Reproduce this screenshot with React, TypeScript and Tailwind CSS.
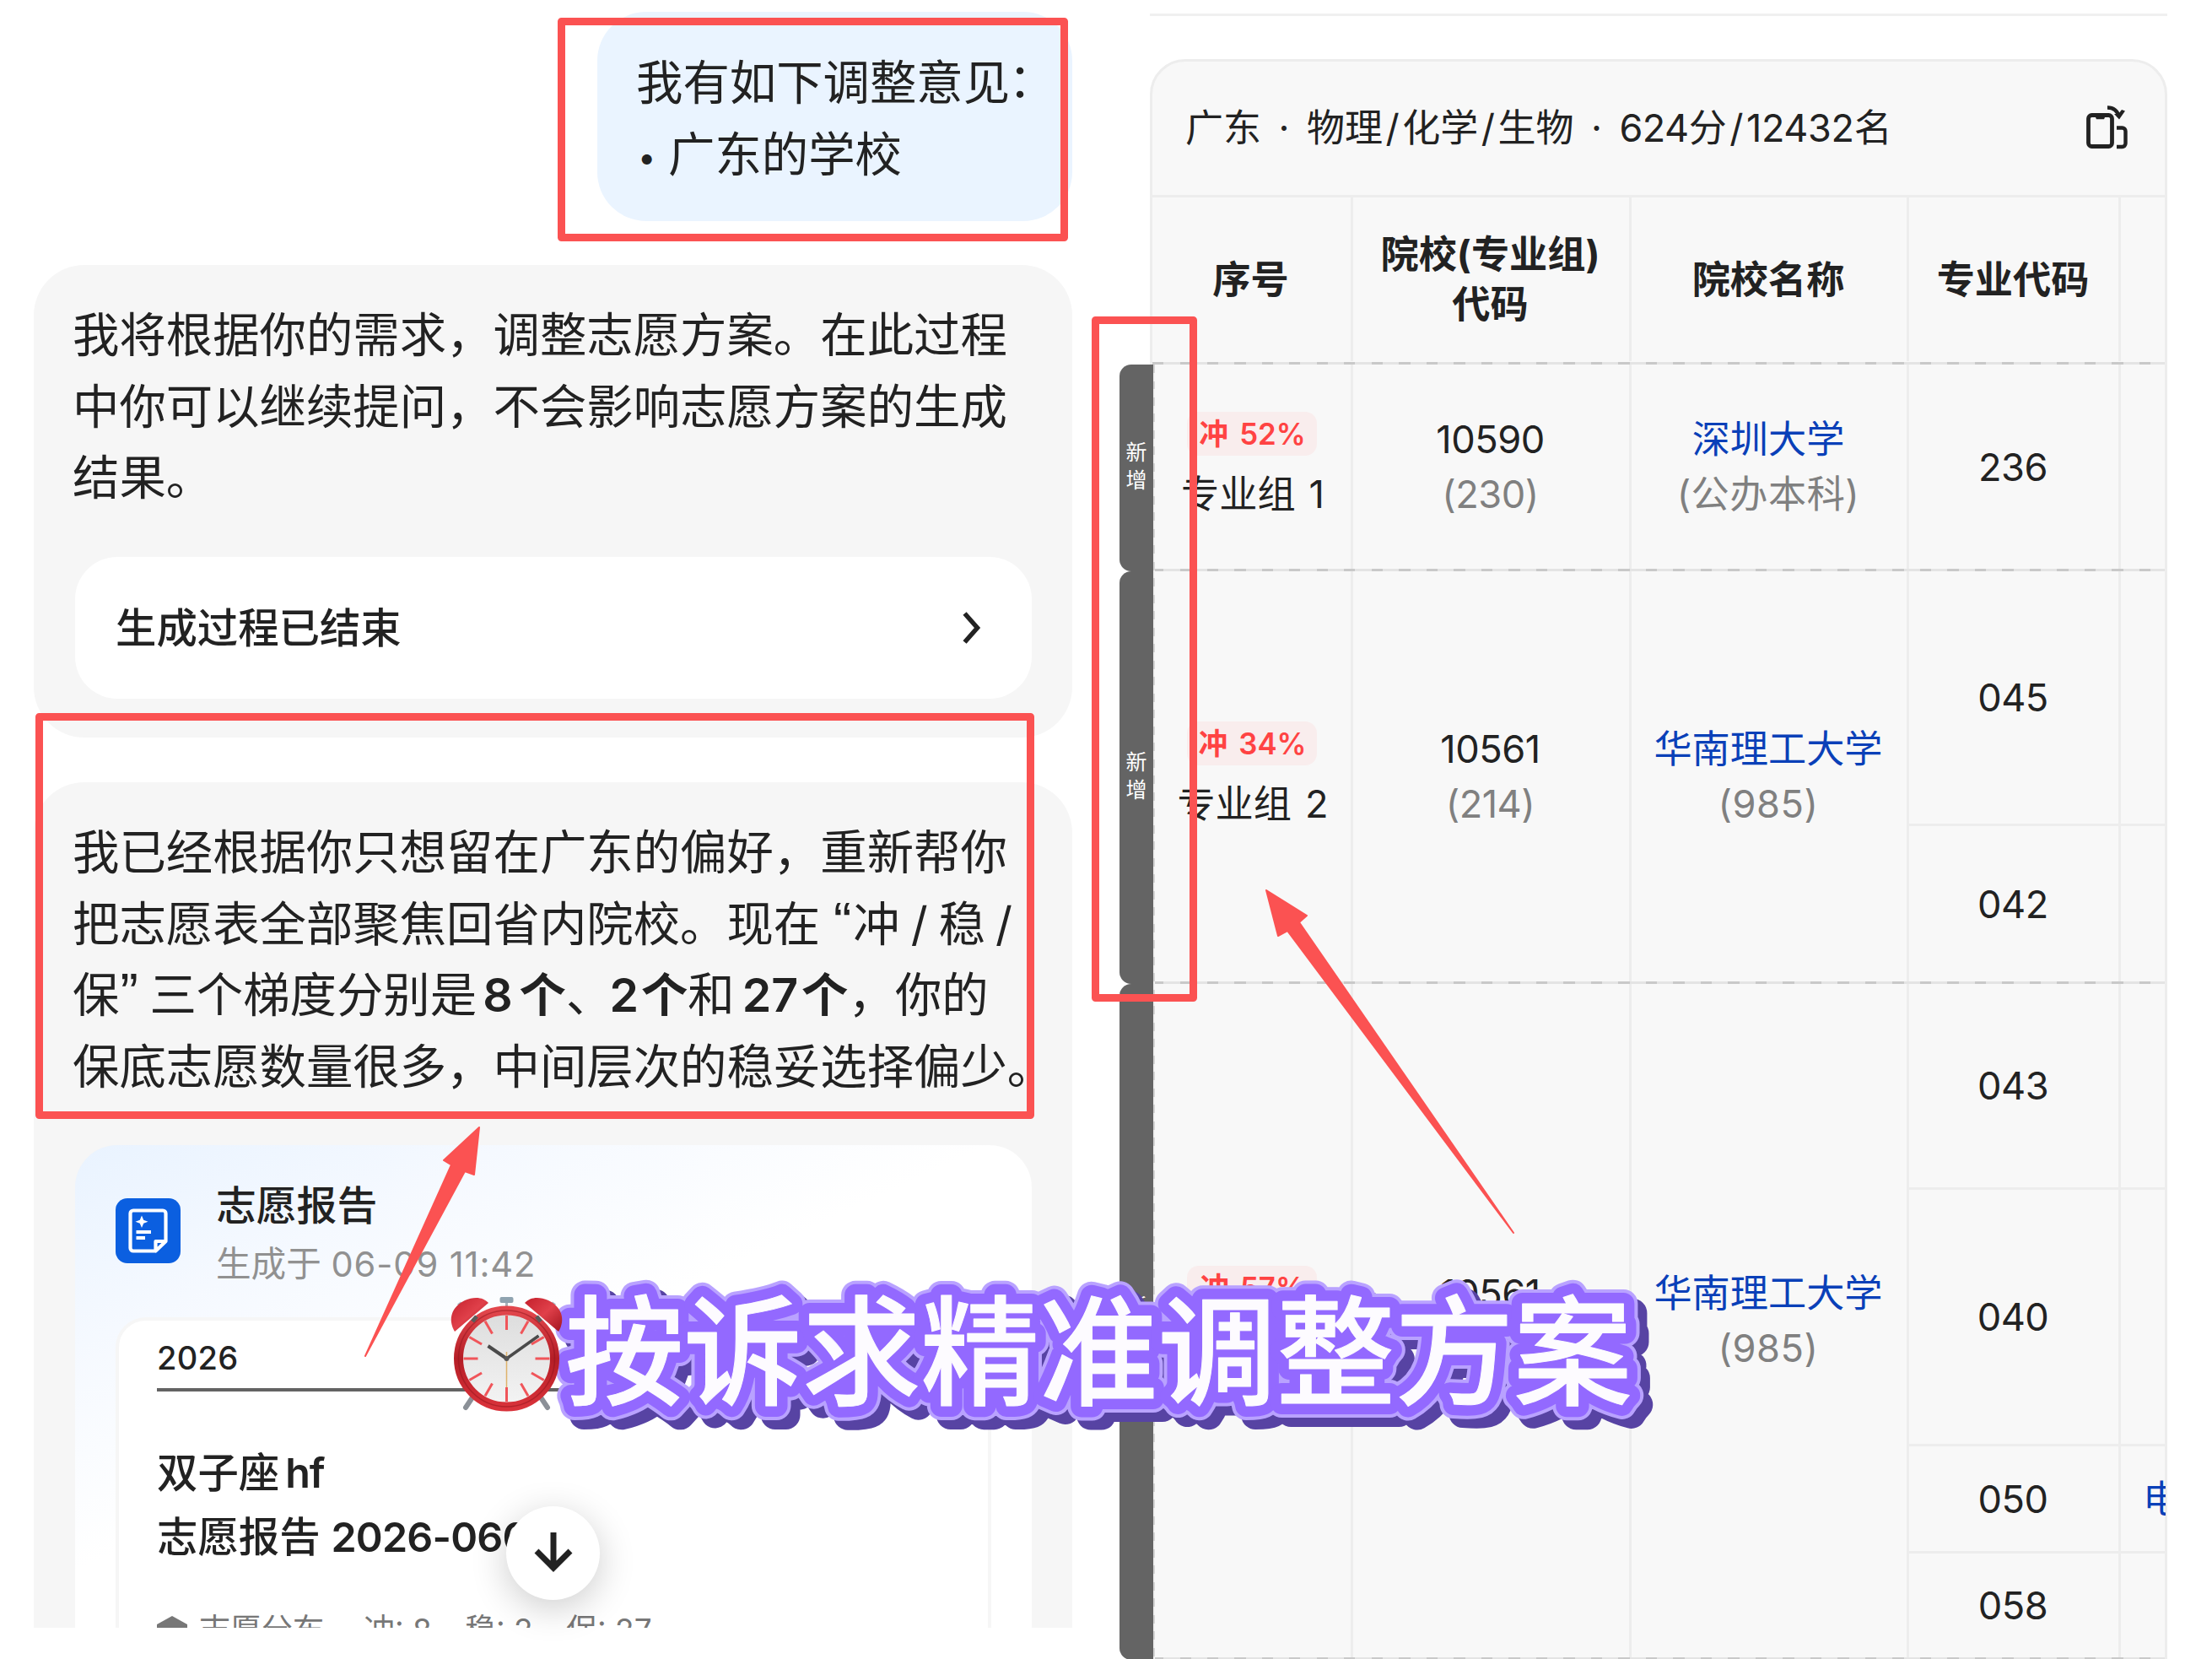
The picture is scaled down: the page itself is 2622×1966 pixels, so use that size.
import type { ReactNode } from "react";

type Major = { code: string; height: string; next?: string };

type Group = {
  rate: string;
  index: number;
  code: string;
  sub: string;
  school: string;
  kind: string;
  height: string;
  majors: Major[];
};

const groups: Group[] = [
  {
    rate: "52%",
    index: 1,
    code: "10590",
    sub: "(230)",
    school: "深圳大学",
    kind: "(公办本科)",
    height: "h-[245px]",
    majors: [{ code: "236", height: "h-[242px]" }],
  },
  {
    rate: "34%",
    index: 2,
    code: "10561",
    sub: "(214)",
    school: "华南理工大学",
    kind: "(985)",
    height: "h-[489px]",
    majors: [
      { code: "045", height: "h-[302px]" },
      { code: "042", height: "h-[185px]" },
    ],
  },
  {
    rate: "57%",
    index: 3,
    code: "10561",
    sub: "(217)",
    school: "华南理工大学",
    kind: "(985)",
    height: "h-[801px]",
    majors: [
      { code: "043", height: "h-[244px]" },
      { code: "040", height: "h-[304px]" },
      { code: "050", height: "h-[127px]", next: "电" },
      { code: "058", height: "h-[123px]" },
    ],
  },
];

function Line({ children }: { children: ReactNode }) {
  return <p className="h-[84.7px] whitespace-nowrap">{children}</p>;
}

function DashedLine() {
  return (
    <div className="absolute inset-x-0 bottom-0 h-[3px] bg-[repeating-linear-gradient(90deg,#c9c9c9_0_13px,#e4e4e4_13px_32.5px)]" />
  );
}

function Cell({ width, children }: { width: string; children?: ReactNode }) {
  return (
    <div
      className={`${width} flex shrink-0 flex-col items-center justify-center border-r-[3px] border-[#ededed] pr-[2px] text-center`}
    >
      {children}
    </div>
  );
}

function Slash() {
  return <span className="mx-[3.500px]">/</span>;
}

function ReportIcon() {
  return (
    <svg viewBox="0 0 77 77" className="mb-[6px] size-[77px] shrink-0">
      <rect width="77" height="77" rx="14" fill="#0b5fe0" />
      <path
        d="M47 62.5H21a3.5 3.5 0 0 1-3.5-3.5V18a3.500 3.500 0 0 1 3.500-3.500h35A3.500 3.500 0 0 1 59.500 18v33L47.500 62.500V51H59"
        fill="none"
        stroke="#fff"
        strokeWidth="4.200"
        strokeLinejoin="round"
      />
      <path d="M31 20.500l2.200 5.300 5.300 2-5.300 2-2.200 5.300-2.200-5.300-5.300-2 5.300-2z" fill="#fff" />
      <path d="M24.500 40H42M24.500 47H35" stroke="#fff" strokeWidth="4.200" />
    </svg>
  );
}

function RotateIcon() {
  return (
    <svg viewBox="0 0 50 52" className="mb-[2px] h-[52px] w-[50px]" fill="none" stroke="#222">
      <rect x="2.500" y="11.500" width="28" height="37" rx="4" strokeWidth="4.800" />
      <path d="M10 12h13l-2 4.300h-9z" fill="#222" stroke="none" />
      <path d="M36 26.500h6.500a4 4 0 0 1 4 4V45a4 4 0 0 1-4 4H36" strokeWidth="4.400" />
      <path d="M25 2.500c8 0 12 4 14 11" strokeWidth="4.400" />
      <path d="M33 10l6 6.500 7-10-4-1.500-4 5z" fill="#222" stroke="none" />
    </svg>
  );
}

function Chat() {
  return (
    <section className="flex h-[1929px] w-[1271px] shrink-0 flex-col overflow-hidden pt-[14px] pl-[40px] text-[55.4px] leading-[84.7px] text-[#222]">
      <div className="h-[248px] w-[563px] shrink-0 self-end rounded-[58px] bg-[#eaf4ff] pt-[42px] pl-[46px]">
        <Line>
          我有如下调整意见<span className="relative -top-[3px] -ml-[2px]">：</span>
        </Line>
        <Line>
          <span className="relative -top-[3px] mr-[6px] ml-[2px] inline-block w-[30px] text-[38px]">•</span>
          广东的学校
        </Line>
      </div>

      <div className="mt-[52px] h-[560px] shrink-0 rounded-[60px] bg-[#f6f6f6] pt-[41px] pl-[46px]">
        <Line>我将根据你的需求，调整志愿方案。在此过程</Line>
        <Line>中你可以继续提问，不会影响志愿方案的生成</Line>
        <Line>结果。</Line>
        <div className="mt-[51px] ml-[3px] flex h-[168px] w-[1134px] items-center justify-between rounded-[50px] bg-white pt-[2px] pr-[59px] pl-[48px] text-[48.400px] font-medium">
          生成过程已结束
          <svg viewBox="0 0 24 42" className="mb-[3px] h-[42px] w-[24px]" fill="none" stroke="#222">
            <path d="M3.500 4l15 17-15 17" strokeWidth="5.500" />
          </svg>
        </div>
      </div>

      <div className="mt-[53px] h-[1100px] shrink-0 rounded-t-[60px] bg-[#f6f6f6] pt-[41px] pl-[46px]">
        <Line>我已经根据你只想留在广东的偏好，重新帮你</Line>
        <Line>
          把志愿表全部聚焦回省内院校。现在
          <span className="inline-block w-[39px] pr-[2px] text-right font-['Liberation_Sans'] text-[64px] leading-none">
            “
          </span>
          冲<span className="mx-[13px]">/</span>稳<span className="ml-[12px]">/</span>
        </Line>
        <Line>
          保
          <span className="inline-block w-[36px] pl-[1px] font-['Liberation_Sans'] text-[64px] leading-none">
            ”
          </span>
          三个梯度分别是
          <b className="ml-[7px] font-semibold">8</b>
          <b className="ml-[8px] font-semibold">个</b>、
          <b className="-ml-[4px] font-semibold">2</b>
          <b className="ml-[3px] font-semibold">个</b>和
          <b className="ml-[9px] font-semibold">27</b>
          <b className="ml-[4px] font-semibold">个</b>，你的
        </Line>
        <Line>保底志愿数量很多，中间层次的稳妥选择偏少。</Line>

        <div className="mt-[50px] ml-[3px] h-[800px] w-[1134px] rounded-[50px] bg-white bg-[linear-gradient(155deg,#e9f3ff_0%,#f5f9ff_18%,#ffffff_38%)] px-[48px] pt-[37px]">
          <div className="flex h-[135px] items-center gap-[42px]">
            <ReportIcon />
            <div>
              <p className="h-[71px] text-[47.800px] leading-[72px] font-medium">志愿报告</p>
              <p className="h-[66px] text-[41.600px] leading-[68px] text-[#919191]">
                生成于 <span className="tracking-[0.900px]">06-09 11:42</span>
              </p>
            </div>
          </div>
          <div className="mt-[32px] h-[600px] rounded-[36px] border-[4px] border-[#f6f6f6] bg-white px-[45px] pt-[16px]">
            <p className="h-[68px] border-b-[4px] border-[#636363] text-[38px] leading-[57px] font-medium tracking-[0.300px]">
              2026
            </p>
            <div className="mt-[59px] text-[48.400px] leading-[76px] font-medium whitespace-nowrap">
              <p>
                双子座<span className="ml-[7px] font-semibold tracking-[-1px]">hf</span>
              </p>
              <p>
                志愿报告 <span className="font-semibold tracking-[-0.800px]">2026-0609</span>
              </p>
            </div>
            <div className="mt-[45px] flex text-[37px] leading-[54px] whitespace-nowrap text-[#777]">
              <svg viewBox="0 0 36 36" className="mt-[8px] mr-[14px] size-[36px]" fill="#777">
                <path d="M18 2l18 10v4L18 26 0 16v-4z" />
              </svg>
              <span className="w-[195px]">志愿分布</span>
              <span className="w-[120px]">冲: 8</span>
              <span className="w-[120px]">稳: 2</span>
              <span>保: 27</span>
            </div>
          </div>
        </div>
      </div>
    </section>
  );
}

function GroupRow({ group }: { group: Group }) {
  return (
    <div className={`${group.height} relative flex pb-[3px] text-[45.2px] leading-[65px] text-[#222]`}>
      <Cell width="w-[238px]">
        <div className="mb-[13px] ml-[3px] flex h-[52px] w-[154px] items-center justify-center gap-[13px] rounded-[14px] bg-[#f9eded] pl-[1px] text-[34.800px] font-semibold text-[#ff4343]">
          <span>冲</span>
          <span>{group.rate}</span>
        </div>
        <p className="ml-[5px] h-[65px] whitespace-nowrap">
          专业组<span className="ml-[16px]">{group.index}</span>
        </p>
      </Cell>
      <Cell width="w-[330px]">
        <p className="tracking-[-0.500px]">{group.code}</p>
        <p className="tracking-[-0.500px] text-[#808080]">{group.sub}</p>
      </Cell>
      <Cell width="w-[329px]">
        <p className="text-[#0a40b8]">{group.school}</p>
        <p className="tracking-[0.500px] text-[#808080]">{group.kind}</p>
      </Cell>
      <div className="flex-1">
        {group.majors.map((m, i) => (
          <div
            key={m.code}
            className={`${m.height} flex ${i < group.majors.length - 1 ? "border-b-[3px] border-[#ededed]" : ""}`}
          >
            <Cell width="w-[251px]">
              <span className="tracking-[-0.500px]">{m.code}</span>
            </Cell>
            <div className="flex w-[53px] items-center overflow-hidden pl-[26px] text-[#0a40b8]">
              {m.next}
            </div>
          </div>
        ))}
      </div>
      <DashedLine />
    </div>
  );
}

function Plan() {
  return (
    <section className="ml-[56px] w-[1242px] shrink-0">
      <div className="mt-[16px] ml-[36px] h-[3px] bg-[#f0f0f0]" />
      <div className="mt-[51px] flex">
        <div className="z-10 w-[40px] shrink-0 pt-[362px]">
          {groups.map((g) => (
            <div
              key={g.index}
              className={`${g.height} flex flex-col items-center justify-center rounded-l-[14px] bg-[#646464] pb-[4px] text-[25px] leading-[32.500px] text-white`}
            >
              <span>新</span>
              <span>增</span>
            </div>
          ))}
        </div>
        <div className="-ml-[4px] w-[1206px] shrink-0 rounded-t-[42px] border-[3px] border-[#ededed] bg-[#f8f8f8]">
          <div className="flex h-[161px] items-center justify-between border-b-[3px] border-[#ededed] pr-[43px] pl-[39px] text-[45px] text-[#222]">
            <p className="whitespace-nowrap">
              广东<span className="mx-[20.500px]">·</span>物理
              <Slash />
              化学
              <Slash />
              生物
              <span className="mx-[20.500px]">·</span>
              <span className="tracking-[-0.500px]">624</span>分<Slash />
              <span className="tracking-[-0.300px]">12432</span>名
            </p>
            <RotateIcon />
          </div>
          <div className="relative flex h-[198px] pb-[4px] text-[45.200px] leading-[59px] font-bold text-[#222]">
            <Cell width="w-[238px]">序号</Cell>
            <Cell width="w-[330px]">
              <p>院校(专业组)</p>
              <p>代码</p>
            </Cell>
            <Cell width="w-[329px]">院校名称</Cell>
            <Cell width="w-[251px]">专业代码</Cell>
            <DashedLine />
          </div>
          <div className="relative">
            {groups.map((g) => (
              <GroupRow key={g.index} group={g} />
            ))}
            <div className="absolute inset-y-0 left-0 w-[3px] bg-[repeating-linear-gradient(180deg,#d4d4d4_0_9.800px,#f0f0f0_9.800px_19.500px)]" />
          </div>
        </div>
      </div>
    </section>
  );
}

function AlarmClock() {
  const ticks = Array.from({ length: 12 }, (_, i) => i * 30);
  return (
    <g>
      <defs>
        <linearGradient id="bell" x1="0" y1="0" x2="1" y2="1">
          <stop offset="0" stopColor="#c4202c" />
          <stop offset="0.500" stopColor="#e0404a" />
          <stop offset="1" stopColor="#a3141e" />
        </linearGradient>
        <linearGradient id="rim" x1="0" y1="0" x2="0" y2="1">
          <stop offset="0" stopColor="#e2474d" />
          <stop offset="0.500" stopColor="#b51e26" />
          <stop offset="1" stopColor="#d8323a" />
        </linearGradient>
        <linearGradient id="face" x1="0" y1="0" x2="0" y2="1">
          <stop offset="0" stopColor="#dcdcdc" />
          <stop offset="1" stopColor="#f4f4f4" />
        </linearGradient>
      </defs>
      <g stroke="#8b9097" strokeWidth="6" strokeLinecap="round">
        <path d="M562 1653l-10 15M639 1653l10 15" />
      </g>
      <path d="M600.500 1541v12" stroke="#a9b2ba" strokeWidth="3" />
      <rect x="592.500" y="1537" width="16" height="7" rx="2" fill="#8fa3b0" />
      <path d="M547 1548l-3-4M654 1548l3-4" stroke="#a9bac4" strokeWidth="5" />
      <path d="M539 1578c-9-15-3-30 12-37 11-5 22-4 28 3z" fill="url(#bell)" />
      <path d="M662 1578c9-15 3-30-12-37-11-5-22-4-28 3z" fill="url(#bell)" />
      <circle cx="600.500" cy="1610" r="57" fill="url(#face)" stroke="url(#rim)" strokeWidth="11" />
      <circle cx="600.500" cy="1610" r="57" fill="none" stroke="#8f141c" strokeWidth="1.500" opacity="0.500" />
      <path d="M560 1566l5-6M641 1566l-5-6" stroke="#5b5b5b" strokeWidth="5" />
      {ticks.map((a) => (
        <path
          key={a}
          d="M600.500 1559v17"
          stroke="#f0555a"
          strokeWidth="3"
          transform={`rotate(${a} 600.500 1610)`}
        />
      ))}
      <path d="M600.500 1610l-22-15" stroke="#4a4a4a" strokeWidth="4" />
      <path d="M600.500 1610l38-27" stroke="#4a4a4a" strokeWidth="3.500" />
      <path d="M600.500 1602v42" stroke="#dfb36b" strokeWidth="1.500" />
      <circle cx="600.500" cy="1610" r="3" fill="#555" />
    </g>
  );
}

// hand-placed marks on top of both screens
function Annotations() {
  return (
    <svg viewBox="0 0 2622 1966" className="absolute inset-0 z-20 h-[1966px] w-[2622px]">
      <g fill="none" stroke="#fb5252" strokeWidth="9" strokeLinejoin="round">
        <rect x="665.500" y="25.500" width="596" height="256" />
        <rect x="46.500" y="849.500" width="1175" height="472" />
        <rect x="1298.500" y="379.500" width="116" height="803" />
      </g>
      <g fill="#fb5252" stroke="#fb5252" strokeWidth="2" strokeLinejoin="round">
        <path d="M568 1336L526 1375l9 5.500L433 1607 551 1388l11 4z" />
        <path d="M1501 1055l48 30-9 8 254 368-268-358-11 6z" />
      </g>
      <g
        fontFamily="'Noto Sans CJK SC', sans-serif"
        fontSize="140.500"
        fontWeight="500"
        strokeLinejoin="round"
      >
        <use href="#slogan" x="11" y="11" fill="#5743a3" stroke="#5743a3" strokeWidth="34" />
        <use href="#slogan" fill="#b9a2ff" stroke="#b9a2ff" strokeWidth="34" />
        <use href="#slogan" fill="#9369ff" stroke="#9369ff" strokeWidth="26" />
        <g fill="#fdfbff" stroke="#fdfbff">
          <text id="slogan" x="670" y="1654">
            按诉求精准调整方案
          </text>
        </g>
      </g>
      <AlarmClock />
    </svg>
  );
}

export default function App() {
  return (
    <main className="relative flex h-[1966px] w-[2622px] overflow-hidden bg-white font-['Inter','Noto_Sans_CJK_SC',sans-serif]">
      <Chat />
      <Plan />
      <div className="absolute top-[1785px] left-[600px] z-10 flex size-[111px] items-center justify-center rounded-full bg-white pb-[3px] shadow-[0_10px_44px_rgba(0,0,0,0.2)]">
        <svg viewBox="0 0 46 50" className="h-[50px] w-[46px]" fill="none" stroke="#222">
          <path d="M23 2v42M3 24l20 20 20-20" strokeWidth="7" />
        </svg>
      </div>
      <Annotations />
    </main>
  );
}
